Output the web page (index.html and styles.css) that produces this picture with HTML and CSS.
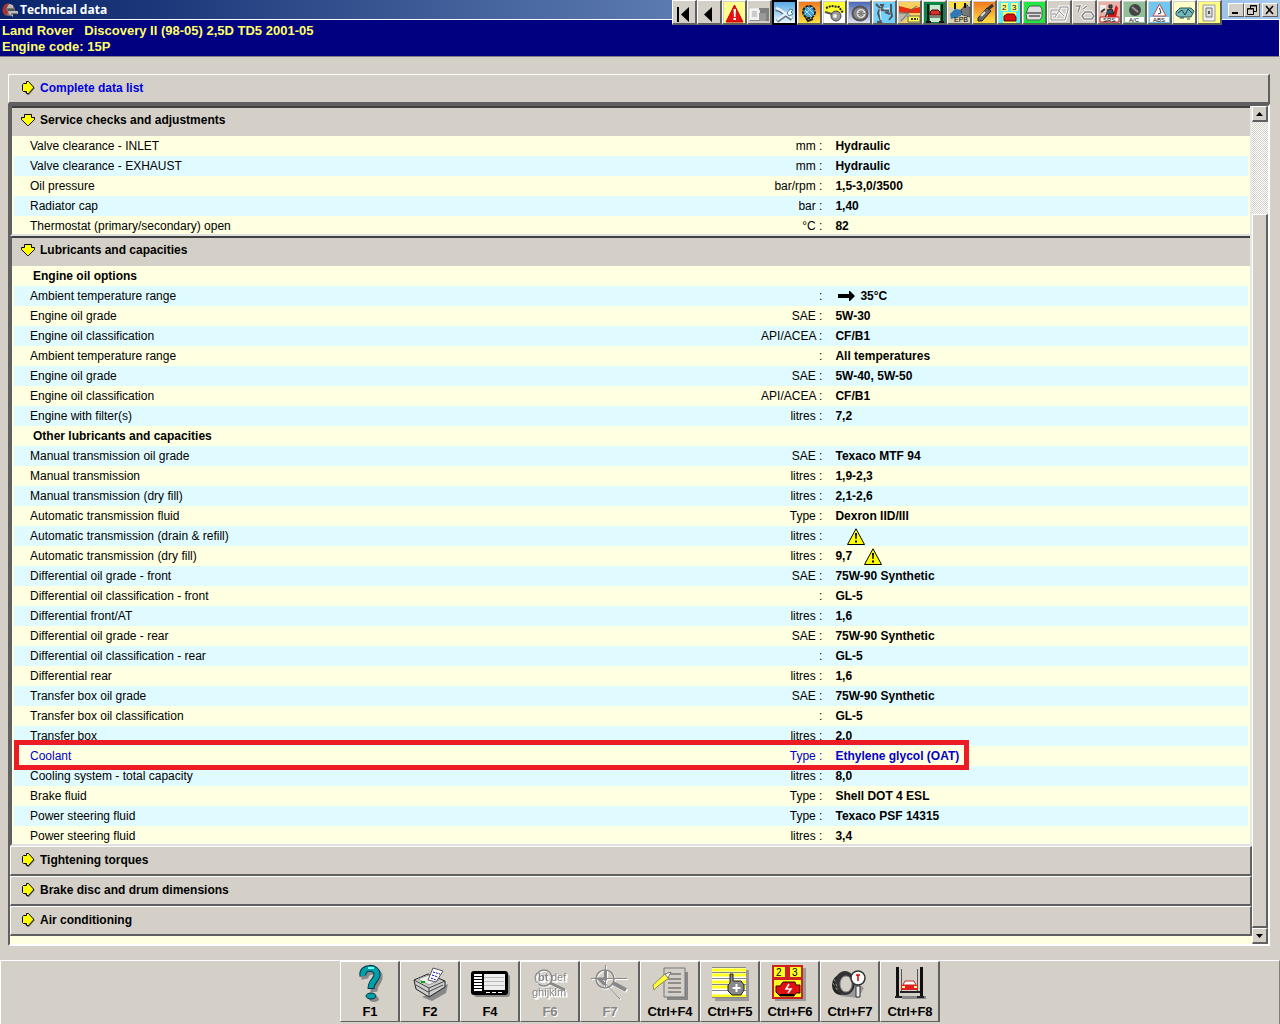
FILE: index.html
```html
<!DOCTYPE html>
<html lang="en">
<head>
    <meta charset="UTF-8">
    <meta name="viewport" content="width=device-width, initial-scale=1.0">
    <title>Technical data</title>
    <link rel="stylesheet" href="styles.css">
</head>
<body>

<!-- shared symbols -->
<svg class="symbols" aria-hidden="true">
    <defs>
        <linearGradient id="orange" x1="0" y1="0" x2="0" y2="1"><stop offset="0" stop-color="#f07820"/><stop offset="1" stop-color="#ffe040"/></linearGradient>
        <linearGradient id="blue" x1="0" y1="0" x2="0" y2="1"><stop offset="0" stop-color="#58a8e8"/><stop offset="1" stop-color="#e8f8ff"/></linearGradient>
        <linearGradient id="navy" x1="0" y1="0" x2="0" y2="1"><stop offset="0" stop-color="#4868b8"/><stop offset="1" stop-color="#e0e4f4"/></linearGradient>
        <symbol id="arrow-right" viewBox="0 0 14 14">
            <path d="M5 14V12H3V6H6V3L13 7L7 14Z" fill="#808080"/>
            <path d="M4.500 .5H6.500L11.500 6V7L6.500 12.500H4.500V10.500H1.500L.5 9.500V3.500L1.500 2.500H4.500Z" fill="#ff0" stroke="#000"/>
        </symbol>
        <symbol id="arrow-down" viewBox="0 0 14 14">
            <path d="M3.500 1.500H10.500V4.500H13.500V6.500L7.500 12.500H6.500L.5 6.500V4.500H3.500Z" fill="#ff0" stroke="#000"/>
        </symbol>
        <symbol id="warning" viewBox="0 0 18 18">
            <path d="M9 .8L17.500 16.500H.5Z" fill="#ff0" stroke="#000"/>
            <path d="M8 5H10L9.600 11H8.400ZM8 12.500H10V14.500H8Z"/>
        </symbol>
    </defs>
</svg>

<header class="titlebar">
    <svg class="app-icon" viewBox="0 0 16 16" aria-hidden="true"><circle cx="7" cy="8" r="6" fill="#777"/><path d="M7 1A7 7 0 0 0 4 14L6 10L4 7Z" fill="#a33"/><path d="M5 6H11V3L7 2ZM6 9H16V12H11V15L7 12Z" fill="#bbb"/><path d="M6 8H12M9 12H15" stroke="#333"/></svg>
    <h1>Technical data</h1>
    <nav class="icon-bar" aria-label="Modules">
        <button aria-label="First"><svg viewBox="2 2 21 21"><path d="M5 7H7V22H5ZM17 7V22L9 14.500Z"/></svg></button>
        <button aria-label="Back"><svg viewBox="2 2 21 21"><path d="M15 7V22L7 14.500Z"/></svg></button>
        <button aria-label="Warnings"><svg viewBox="2 2 21 21"><path d="M2 2H23V23H2Z" fill="#ffff90"/><path d="M12.500 5L21 22H4Z" fill="#e81010" stroke="#c00"/><path d="M11.500 9H14L13.500 17H12ZM11.500 18H14V20H11.500Z" fill="#fff"/></svg></button>
        <button aria-label="Identification"><svg viewBox="2 2 21 21"><path d="M3 9H12V20H3Z" fill="#eee" stroke="#fff"/><path d="M12 8H22V21H19V14H13V10H12Z" fill="#808080"/><path d="M12 13H19V21H12Z" fill="#999"/><path d="M5 11H10V17H5Z" fill="#ccc"/><path d="M3 20.500H12" stroke="#888"/></svg></button>
        <button class="current" aria-label="Technical data"><svg viewBox="2 2 21 21"><path d="M2 2H23V23H2Z" fill="url(#blue)"/><path d="M5 21L16 13M4 9L9 11L14 15L20 19" stroke="#607080" stroke-width="4" fill="none"/><path d="M5 20L16 12M4 8L9 10L14 14L20 18" stroke="#e8f4ff" stroke-width="2.500" fill="none"/><path d="M15 13L18 9L21 10L19 12L21 14L17 16Z" fill="#dff" stroke="#579"/></svg></button>
        <button aria-label="Timing belts"><svg viewBox="2 2 21 21"><path d="M2 2H23V23H2Z" fill="url(#orange)"/><circle cx="12" cy="12" r="6" fill="#48a0d0" stroke="#222" stroke-width="2" stroke-dasharray="3 1"/><path d="M8 10L15 17M10 7L17 14M8 14L15 7" stroke="#a8e0ff"/><path d="M9 18L11 21L16 19" fill="none" stroke="#222" stroke-width="2"/></svg></button>
        <button aria-label="Auxiliary belts"><svg viewBox="2 2 21 21"><path d="M2 2H23V13H2Z" fill="#ffff30"/><path d="M2 13H23V23H2Z" fill="#fff"/><path d="M4 8L9 6L17 7L21 13" fill="none" stroke="#222" stroke-dasharray="2 1" stroke-width="2"/><path d="M3 12L10 14" stroke="#555" stroke-width="2"/><circle cx="14" cy="16" r="5" fill="#999" stroke="#444"/><circle cx="13" cy="16" r="2" fill="#eee"/></svg></button>
        <button aria-label="Tyres"><svg viewBox="2 2 21 21"><path d="M2 2H23V23H2Z" fill="url(#navy)"/><ellipse cx="13" cy="13.500" rx="7.500" ry="7" fill="#888" stroke="#555" stroke-width="2"/><circle cx="14" cy="13.500" r="4" fill="#bbb" stroke="#eee"/><path d="M14 10V17M10.500 13.500H18M12 11L16 16M12 16L16 11" stroke="#777"/></svg></button>
        <button aria-label="Wheel alignment"><svg viewBox="2 2 21 21"><path d="M2 2H23V23H2Z" fill="#70d0ff"/><path d="M4 4L8 8L6 13L9 22H5M8 5H11L9 10L17 11M19 4V11L20 16L17 20M13 12L18 14" fill="none" stroke="#555" stroke-width="2"/><path d="M8 8L9 20M12 9L18 8" stroke="#eee"/></svg></button>
        <button aria-label="Service"><svg viewBox="2 2 21 21"><path d="M2 2H23V23H2Z" fill="#f8d060"/><path d="M2 6L14 9L23 7V13H2Z" fill="#e83010"/><path d="M2 12L14 14L5 22H2Z" fill="#b8b8a8"/><path d="M4 21L14 10L20 6M2 13H12" stroke="#666" fill="none"/><path d="M11 16H23V22H11Z" fill="#ffff50" stroke="#666"/><path d="M14 19H21" stroke="#333" stroke-dasharray="2 1" stroke-width="2"/></svg></button>
        <button aria-label="Lifting points"><svg viewBox="2 2 21 21"><path d="M2 2H23V23H2Z" fill="#088848"/><path d="M8 5H18V22H8Z" fill="#c8e8d0"/><path d="M6 4V23M20 4V23M4 22H9M17 22H22" stroke="#111" stroke-width="2"/><path d="M8 12L10 10H16L18 12V15H8Z" fill="#d83030" stroke="#400"/><path d="M8 17H18" stroke="#222"/></svg></button>
        <button aria-label="Parking brake"><svg viewBox="2 2 21 21"><path d="M2 2H23V23H2Z" fill="#d8d0b0"/><path d="M2 2H23L13 9L2 7Z" fill="#ffe040"/><path d="M3 14L8 9L16 10L14 16L4 19Z" fill="#3078b8"/><path d="M14 10L19 4L23 8V17L15 15Z" fill="#777" stroke="#333" stroke-dasharray="2 1"/><path d="M8 3V9M18 3V8" stroke="#111" stroke-width="2"/><text x="7" y="22" font-size="7">EPB</text></svg></button>
        <button aria-label="Tests"><svg viewBox="2 2 21 21"><path d="M2 2H23V23H2Z" fill="url(#orange)"/><path d="M6 18L15 8L19 11L10 21H6Z" fill="#666" stroke="#222"/><path d="M16 9L21 5" stroke="#333" stroke-width="3"/><path d="M9 16L13 12" stroke="#ddd" stroke-width="2"/></svg></button>
        <button aria-label="Fault codes"><svg viewBox="2 2 21 21"><path d="M2 2H23V23H2Z" fill="#50f0ff"/><path d="M4 3H11V11H4ZM14 3H21V11H14Z" fill="#ffff80"/><path d="M6 12H19V23H6Z" fill="#ffff60"/><path d="M7 16L10 14H17L19 17V21H7Z" fill="#d81010" stroke="#600"/><text x="5" y="10" font-size="8">2</text><text x="15" y="10" font-size="8">3</text></svg></button>
        <button aria-label="Control modules"><svg viewBox="2 2 21 21"><path d="M2 2H23V23H2Z" fill="#20e840"/><path d="M6 8L8 6H18L20 9V17L18 20H5L4 14Z" fill="#ddd" stroke="#555"/><path d="M5 13H19M7 16H18" stroke="#777" stroke-width="2"/></svg></button>
        <button aria-label="Engine management" disabled><svg viewBox="2 2 21 21"><path d="M4 10H13V7H21V10L18 20H4ZM8 17L12 11L17 16M5 14H9" fill="none" stroke="#fff" stroke-width="3"/><path d="M4 10H13V7H21V10L18 20H4ZM8 17L12 11L17 16M5 14H9" fill="none" stroke="#888"/></svg></button>
        <button aria-label="Vehicle wiring" disabled><svg viewBox="2 2 21 21"><path d="M4 6H8L6 12M11 9L15 6M10 16L13 12H19L22 16L20 19H12Z" fill="none" stroke="#fff" stroke-width="3"/><path d="M4 6H8L6 12M11 9L15 6M10 16L13 12H19L22 16L20 19H12Z" fill="none" stroke="#888" stroke-width="1.500"/></svg></button>
        <button aria-label="Airbags"><svg viewBox="2 2 21 21"><path d="M2 2H23V23H2Z" fill="#e8b0a8"/><path d="M3 5H9V12H3Z" fill="#eee"/><path d="M19 5L21 8L19 17H11V14H16Z" fill="#e01010"/><path d="M12 5H15V8H12ZM10 10L15 9L17 14H10L8 17" fill="#356" stroke="#222"/><path d="M4 12L8 9" stroke="#333" stroke-width="2"/><path d="M3 17H22V22H3Z" fill="#fff" stroke="#b22"/><text x="6" y="22" font-size="6">SRS</text></svg></button>
        <button aria-label="Air conditioning"><svg viewBox="2 2 21 21"><path d="M2 2H23V23H2Z" fill="#90c098"/><circle cx="13" cy="10" r="6" fill="#444"/><path d="M10 7L16 12" stroke="#999" stroke-width="2"/><path d="M3 17H22V22H3Z" fill="#fff"/><text x="7" y="22" font-size="6">A/C</text></svg></button>
        <button aria-label="ABS"><svg viewBox="2 2 21 21"><path d="M2 2H23V23H2Z" fill="#70c8f0"/><path d="M12.500 4L19 16H6Z" fill="#fff" stroke="#c44"/><path d="M12.500 8L14 13L11 14" fill="none" stroke="#333"/><path d="M3 17H22V22H3Z" fill="#fff"/><text x="6" y="22" font-size="6">ABS</text></svg></button>
        <button aria-label="Engine location"><svg viewBox="2 2 21 21"><path d="M2 2H23V23H2Z" fill="#ffffc8"/><path d="M4 12L8 8H19L22 11L19 17H7L4 15Z" fill="#70b8b8" stroke="#355"/><path d="M6 13L10 10L13 15L16 9L20 13M8 18H12M15 19H18" fill="none" stroke="#245"/></svg></button>
        <button aria-label="Fuses"><svg viewBox="2 2 21 21"><path d="M2 2H23V23H2Z" fill="#ffff80"/><path d="M6 5H18V21H6Z" fill="#eee" stroke="#999"/><path d="M9 8H15V17H9Z" fill="#ddd" stroke="#777"/><path d="M12 11V14" stroke="#555" stroke-width="2"/></svg></button>
    </nav>
    <div class="window-buttons">
        <button aria-label="Minimize"><svg viewBox="0 0 12 10"><path d="M2 7H8V9H2Z"/></svg></button>
        <button aria-label="Restore"><svg viewBox="0 0 12 10"><path d="M4.500 3V.5H10.500V6.500H8M4 1H11M2 4H8M1.500 3.500H7.500V9.500H1.500Z" fill="none" stroke="#000"/></svg></button>
        <button class="close" aria-label="Close"><svg viewBox="0 0 12 10"><path d="M2 1L9 9M9 1L2 9" stroke="#000" stroke-width="1.500"/></svg></button>
    </div>
</header>

<div class="vehicle">
    <p>Land Rover &nbsp; Discovery II (98-05) 2,5D TD5 2001-05</p>
    <p>Engine code: 15P</p>
</div>

<main>
    <button class="bar complete"><svg class="arrow"><use href="#arrow-right"/></svg>Complete data list</button>

    <div class="list">
        <div class="sections">
            <section class="open">
                <button class="bar"><svg class="arrow"><use href="#arrow-down"/></svg>Service checks and adjustments</button>
                <table>
                    <colgroup><col class="item"><col class="unit"><col></colgroup>
                    <tr><td>Valve clearance - INLET</td><td>mm :</td><td>Hydraulic</td></tr>
                    <tr><td>Valve clearance - EXHAUST</td><td>mm :</td><td>Hydraulic</td></tr>
                    <tr><td>Oil pressure</td><td>bar/rpm :</td><td>1,5-3,0/3500</td></tr>
                    <tr><td>Radiator cap</td><td>bar :</td><td>1,40</td></tr>
                    <tr><td>Thermostat (primary/secondary) open</td><td>°C :</td><td>82</td></tr>
                </table>
            </section>
            <section class="open">
                <button class="bar"><svg class="arrow"><use href="#arrow-down"/></svg>Lubricants and capacities</button>
                <table>
                    <colgroup><col class="item"><col class="unit"><col></colgroup>
                    <tr><th colspan="3">Engine oil options</th></tr>
                    <tr><td>Ambient temperature range</td><td>:</td><td><svg class="to" viewBox="0 0 17 10"><path d="M0 3H11V0H12L17 5L12 10H11V7H0Z"/></svg>35°C</td></tr>
                    <tr><td>Engine oil grade</td><td>SAE :</td><td>5W-30</td></tr>
                    <tr><td>Engine oil classification</td><td>API/ACEA :</td><td>CF/B1</td></tr>
                    <tr><td>Ambient temperature range</td><td>:</td><td>All temperatures</td></tr>
                    <tr><td>Engine oil grade</td><td>SAE :</td><td>5W-40, 5W-50</td></tr>
                    <tr><td>Engine oil classification</td><td>API/ACEA :</td><td>CF/B1</td></tr>
                    <tr><td>Engine with filter(s)</td><td>litres :</td><td>7,2</td></tr>
                    <tr><th colspan="3">Other lubricants and capacities</th></tr>
                    <tr><td>Manual transmission oil grade</td><td>SAE :</td><td>Texaco MTF 94</td></tr>
                    <tr><td>Manual transmission</td><td>litres :</td><td>1,9-2,3</td></tr>
                    <tr><td>Manual transmission (dry fill)</td><td>litres :</td><td>2,1-2,6</td></tr>
                    <tr><td>Automatic transmission fluid</td><td>Type :</td><td>Dexron IID/III</td></tr>
                    <tr><td>Automatic transmission (drain &amp; refill)</td><td>litres :</td><td><svg class="warn"><use href="#warning"/></svg></td></tr>
                    <tr><td>Automatic transmission (dry fill)</td><td>litres :</td><td>9,7<svg class="warn"><use href="#warning"/></svg></td></tr>
                    <tr><td>Differential oil grade - front</td><td>SAE :</td><td>75W-90 Synthetic</td></tr>
                    <tr><td>Differential oil classification - front</td><td>:</td><td>GL-5</td></tr>
                    <tr><td>Differential front/AT</td><td>litres :</td><td>1,6</td></tr>
                    <tr><td>Differential oil grade - rear</td><td>SAE :</td><td>75W-90 Synthetic</td></tr>
                    <tr><td>Differential oil classification - rear</td><td>:</td><td>GL-5</td></tr>
                    <tr><td>Differential rear</td><td>litres :</td><td>1,6</td></tr>
                    <tr><td>Transfer box oil grade</td><td>SAE :</td><td>75W-90 Synthetic</td></tr>
                    <tr><td>Transfer box oil classification</td><td>:</td><td>GL-5</td></tr>
                    <tr><td>Transfer box</td><td>litres :</td><td>2,0</td></tr>
                    <tr class="selected"><td>Coolant<span class="marker"></span></td><td>Type :</td><td>Ethylene glycol (OAT)</td></tr>
                    <tr><td>Cooling system - total capacity</td><td>litres :</td><td>8,0</td></tr>
                    <tr><td>Brake fluid</td><td>Type :</td><td>Shell DOT 4 ESL</td></tr>
                    <tr><td>Power steering fluid</td><td>Type :</td><td>Texaco PSF 14315</td></tr>
                    <tr><td>Power steering fluid</td><td>litres :</td><td>3,4</td></tr>
                </table>
            </section>
            <button class="bar closed"><svg class="arrow"><use href="#arrow-right"/></svg>Tightening torques</button>
            <button class="bar closed"><svg class="arrow"><use href="#arrow-right"/></svg>Brake disc and drum dimensions</button>
            <button class="bar closed"><svg class="arrow"><use href="#arrow-right"/></svg>Air conditioning</button>
        </div>
        <div class="scrollbar">
            <button aria-label="Scroll up"><svg viewBox="0 0 8 4"><path d="M0 4H7L3.500 0Z"/></svg></button>
            <div class="track"></div>
            <div class="thumb"></div>
            <button aria-label="Scroll down"><svg viewBox="0 0 8 4"><path d="M0 0H7L3.500 4Z"/></svg></button>
        </div>
    </div>
</main>

<footer class="function-keys">
    <button><svg viewBox="2 2 56 40"><g fill="none" stroke-width="7"><path d="M25 18C23 8 41 8 39 17C38 23 33 23 34 31" stroke="#888"/><path d="M23 15C21 5 38 5 37 14C36 20 31 20 31 28" stroke="#034"/><path d="M23 15C21 5 38 5 37 14C36 20 31 20 31 27" stroke="#00a0a8" stroke-width="5"/></g><path d="M28 7H34" stroke="#7ff" stroke-width="2"/><ellipse cx="34" cy="38" rx="5" ry="3" fill="#888"/><ellipse cx="31" cy="35" rx="5" ry="3" fill="#00a0a8" stroke="#034"/></svg>F1</button>
    <button><svg viewBox="2 2 56 40"><path d="M22 36L48 23L46 32L32 40Z" fill="#888"/><path d="M14 19L28 13L45 20V26L29 36L16 28Z" fill="#ccc" stroke="#222"/><path d="M14 19L29 27L45 20M29 27V36M16 24L28 31L43 24" fill="none" stroke="#444"/><path d="M18 18L29 14L39 19L29 24Z" fill="#eee" stroke="#999"/><path d="M28 19L33 7L43 10L36 21Z" fill="#fff" stroke="#555"/><path d="M33 11L40 13M32 14L38 16M31 17L36 19" stroke="#00c" stroke-dasharray="2 1"/><path d="M21 21H25" stroke="#0a0" stroke-width="2"/></svg>F2</button>
    <button><svg viewBox="2 2 56 40"><rect x="14" y="13" width="36" height="23" rx="3" fill="#888"/><rect x="11" y="10" width="37" height="24" rx="3"/><path d="M14 13H22V30H14Z" fill="#fff"/><path d="M14 15.500H22M14 18.500H22M14 21.500H22M14 24.500H22M14 27.500H22" stroke="#000"/><path d="M24 13H45V29H24Z" fill="#eee"/><path d="M24 16.500H44M24 20.500H44M24 24.500H44" stroke="#bbb"/><path d="M26 31.500H43" stroke="#fff" stroke-dasharray="4 2"/></svg>F4</button>
    <button disabled><svg viewBox="2 2 56 40"><g class="relief" fill="none"><circle cx="24" cy="17" r="8" stroke="#888" stroke-width="1.500"/><path d="M30 22L45 29" stroke="#888" stroke-width="3"/><g fill="#888" font-size="11"><text x="14" y="20">(</text><text x="18" y="20" font-weight="bold">bt</text><text x="31" y="20">def</text><text x="12" y="35">ghijklm</text></g></g></svg>F6</button>
    <button disabled><svg viewBox="2 2 56 40"><g class="relief" fill="none" stroke="#888"><circle cx="25" cy="18" r="9" stroke-width="1.500"/><path d="M25.500 4V26M11 17.500H47M23 20L40 38"/><path d="M25.500 10V18H19L25 24" stroke-width="3"/><path d="M33 22L46 29" stroke-width="4"/></g></svg>F7</button>
    <button><svg viewBox="2 2 56 40"><path d="M27 11H48V39H27Z" fill="#888"/><path d="M24 7H45V36H24Z" fill="#d4d0c8" stroke="#777"/><path d="M28 13H41M28 18H41M28 22H41M28 27H41M28 31H41" stroke="#777" stroke-width="1.500"/><path d="M13 24L25 13L29 17L18 25L14 29Z" fill="#ff3" stroke="#886"/><path d="M25 13L31 11L28 17Z" fill="#fff" stroke="#777"/></svg>Ctrl+F4</button>
    <button><svg viewBox="2 2 56 40"><path d="M15 9H49V40H15Z" fill="#999"/><path d="M12 6H46V37H12Z" fill="#fff"/><path d="M12 9H46M12 14H46M12 21H46M12 26H46M12 35H46" stroke="#ffff20" stroke-width="3"/><path d="M12 6.500H46M12 11.500H46M12 17.500H46M12 23.500H46M12 29.500H46M12 36.500H46" stroke="#888"/><path d="M30 22V13H33V20H41L44 24V29L41 34H32L28 30V24Z" fill="#888" stroke="#222"/><path d="M36.500 23V31M32.500 27H40.500" stroke="#fff" stroke-width="2"/></svg>Ctrl+F5</button>
    <button><svg viewBox="2 2 56 40"><path d="M15 7H46V40H15Z" fill="#999"/><path d="M12 4H43V38H12Z" fill="#d02020"/><path d="M14 6H25V16H14ZM30 6H41V16H30ZM14 19H41V36H14Z" fill="#ffff20"/><text x="16" y="15" font-size="10">2</text><text x="32" y="15" font-size="10">3</text><path d="M16 25H20L23 21H35L36 24H40V32H36L34 35H20L16 31Z" fill="#e01010" stroke="#300"/><path d="M29 23L26 28H31L28 32" fill="none" stroke="#fff" stroke-width="1.500"/><path d="M20 34H34" stroke="#000" stroke-width="2"/></svg>Ctrl+F6</button>
    <button><svg viewBox="2 2 56 40"><path d="M20 35L38 37L44 27L30 16Z" fill="#999"/><ellipse cx="20" cy="24" rx="8" ry="10" fill="#222"/><ellipse cx="25" cy="22" rx="10" ry="12" fill="#333"/><ellipse cx="26" cy="23" rx="6" ry="8" fill="#d4d0c8" stroke="#888"/><path d="M14 18L18 28M13 22L18 31" stroke="#888" stroke-dasharray="3 2"/><path d="M36 25V36H40V25Z" fill="#eee" stroke="#333"/><circle cx="38" cy="17" r="7" fill="#fff" stroke="#333" stroke-width="1.500"/><path d="M38 14V20M36 14H40" stroke="#d00" stroke-width="1.500"/></svg>Ctrl+F7</button>
    <button><svg viewBox="2 2 56 40"><path d="M22 35H46V38H22Z" fill="#888"/><path d="M17.500 6V36M41.500 6V36" stroke="#111" stroke-width="3"/><path d="M21.500 8V32M37.500 8V32" stroke="#555"/><path d="M15 36H22M37 36H44M20 31H40" stroke="#222" stroke-width="2"/><path d="M23 24L25 20H34L36 24Z" fill="#fff" stroke="#c22"/><path d="M21 24H38V29H21Z" fill="#e02020"/><path d="M22 26H25M34 26H37" stroke="#ff8" stroke-width="2"/></svg>Ctrl+F8</button>
</footer>

</body>
</html>
```
FILE: styles.css
```css
* {
    box-sizing: border-box;
}
body {
    margin: 0;
    min-height: 100vh;
    display: flex;
    flex-direction: column;
    background-color: #d4d0c8;
    color: #000;
    font-family: "Liberation Sans", Arial, sans-serif;
    font-size: 12px;
}
button {
    font: inherit;
    color: inherit;
    padding: 0;
    margin: 0;
    background-color: #d4d0c8;
    border: solid;
    border-width: 1px 2px 2px 1px;
    border-color: #fff #606060 #606060 #fff;
}
svg {
    display: block;
}
.symbols {
    position: absolute;
    width: 0;
    height: 0;
}

/* title bar */
.titlebar {
    position: relative;
    display: flex;
    align-items: center;
    height: 19px;
    padding-left: 2px;
    gap: 2px;
    background: linear-gradient(to right, #0a246a, #a6caf0);
}
.app-icon {
    width: 16px;
    height: 16px;
}
.titlebar h1 {
    margin: 0;
    color: #fff;
    font-family: "Open Sans", "Noto Sans", sans-serif;
    font-size: 12px;
    line-height: 16px;
}
.icon-bar {
    position: absolute;
    top: 0;
    right: 58px;
    display: flex;
}
.icon-bar button {
    width: 25px;
    height: 25px;
    padding: 1px 0 0 1px;
}
.icon-bar svg {
    width: 21px;
    height: 21px;
}
.icon-bar .current {
    padding: 0;
    border: 2px solid #000;
}
.window-buttons {
    display: flex;
    margin-left: auto;
    padding-right: 2px;
}
.window-buttons button {
    width: 16px;
    height: 14px;
    border-width: 1px;
}
.window-buttons svg {
    width: 12px;
    height: 10px;
    margin: 0 auto;
}
.window-buttons .close {
    margin-left: 2px;
}

/* vehicle */
.vehicle {
    padding: 3px 2px 1px;
    border-top: 1px solid #fff;
    border-right: 1px solid #fff;
    border-bottom: 1px solid #808080;
    background-color: #000080;
    color: #ff6;
    font-size: 13px;
    font-weight: bold;
    line-height: 16px;
}
.vehicle p {
    margin: 0;
}

/* data list */
main {
    flex: 1;
    padding: 17px 10px 14px 8px;
}
.bar {
    display: flex;
    align-items: center;
    width: 100%;
    height: 30px;
    padding: 0 0 2px 11px;
    gap: 4px;
    font-weight: bold;
}
.arrow {
    width: 14px;
    height: 14px;
}
.complete {
    padding-left: 13px;
    color: #0000e0;
}
.list {
    display: flex;
    border: 2px solid;
    border-color: #606060 #fff #fff #606060;
    background-color: #ffffe1;
}
.sections {
    flex: 1;
    padding-bottom: 8px;
}
.open {
    border-left: 2px solid #606060;
    border-right: 2px solid #e8e8e8;
    border-bottom: 2px solid #e0e0e0;
    background-color: #ffffe1;
}
.open .bar {
    padding: 0 0 5px 9px;
    gap: 5px;
    border-width: 2px 0 0;
    border-color: #404040;
}
table {
    width: calc(100% - 4px);
    margin: 0 2px;
    table-layout: fixed;
    border-collapse: collapse;
}
.item {
    width: 50%;
}
.unit {
    width: 16%;
}
tr {
    position: relative;
}
tr:nth-child(even) {
    background-color: #e0fbff;
}
td, th {
    height: 20px;
    padding: 2px 0;
    line-height: 16px;
    text-align: left;
}
tr:last-child td {
    height: 18px;
    padding-bottom: 0;
}
td:first-child {
    padding-left: 16px;
}
th {
    padding-left: 19px;
}
td:nth-child(2) {
    padding-right: 6px;
    text-align: right;
}
td:nth-child(3) {
    padding-left: 7px;
    font-weight: bold;
}
td svg {
    display: inline-block;
    vertical-align: middle;
}
.to {
    width: 17px;
    height: 10px;
    margin: -2px 5px 0 3px;
}
.warn {
    width: 18px;
    height: 18px;
    margin: -2px 0 -2px 12px;
}
.selected {
    z-index: 1;
    color: #0000c8;
}
.marker {
    position: absolute;
    top: -6px;
    left: 0;
    width: 77.4%;
    height: 30px;
    border: 5px solid #ed1c24;
}

/* scrollbar */
.scrollbar {
    display: flex;
    flex-direction: column;
    width: 16px;
}
.scrollbar button {
    height: 16px;
}
.scrollbar svg {
    width: 8px;
    height: 4px;
    margin: 0 auto;
}
.track {
    flex: 92;
    background: repeating-conic-gradient(#fff 0 25%, #d4d0c8 0 50%) 0 0 / 2px 2px;
}
.thumb {
    flex: 714;
    border: solid;
    border-width: 1px 2px 2px 1px;
    border-color: #fff #606060 #606060 #fff;
    background-color: #d4d0c8;
}

/* function keys */
.function-keys {
    display: flex;
    justify-content: center;
    height: 64px;
    padding-bottom: 2px;
    border-top: 1px solid #fff;
    border-left: 1px solid #fff;
    border-right: 1px solid #808080;
}
.function-keys button {
    width: 60px;
    border-width: 1px 2px 1px 1px;
    padding-left: 1px;
    line-height: 17px;
    font-size: 13px;
    font-weight: bold;
}
.function-keys svg {
    width: 56px;
    height: 40px;
    font-weight: normal;
}
.function-keys button:disabled {
    color: #888;
    text-shadow: 1px 1px #fff;
}
.relief {
    filter: drop-shadow(1px 1px #fff);
}
```
